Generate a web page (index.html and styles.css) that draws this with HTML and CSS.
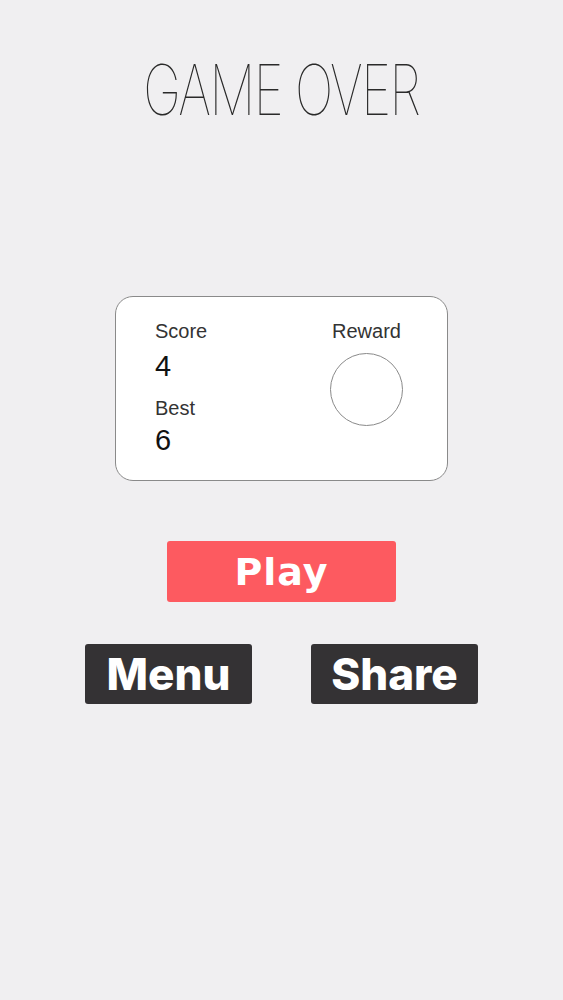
FILE: index.html
```
<!DOCTYPE html>
<html>
<head>
<meta charset="utf-8">
<link rel="stylesheet" href="styles.css">
</head>
<body>
<main class="screen">
  <h1 class="title">GAME OVER</h1>
  <section class="card">
    <div class="stats">
      <div class="label">Score</div>
      <div class="value">4</div>
      <div class="label label-best">Best</div>
      <div class="value value-best">6</div>
    </div>
    <div class="reward">
      <div class="label">Reward</div>
      <div class="coin"></div>
    </div>
  </section>
  <button class="btn btn-play">Play</button>
  <div class="row">
    <button class="btn btn-dark">Menu</button>
    <button class="btn btn-dark">Share</button>
  </div>
</main>
</body>
</html>
```
FILE: styles.css
```
html, body {
  margin: 0;
  padding: 0;
  background: #f0eff1;
}
.screen {
  width: 563px;
  height: 1000px;
  display: flex;
  flex-direction: column;
  align-items: center;
}
.title {
  margin: 55px 0 0 0;
  font-family: "Inter", sans-serif;
  font-weight: 100;
  font-size: 70px;
  line-height: 70px;
  color: #2a2a2a;
  letter-spacing: -2px;
  transform: scaleX(0.73);
  white-space: nowrap;
}
.card {
  margin-top: 171px;
  width: 333px;
  height: 185px;
  box-sizing: border-box;
  border: 1px solid #8a8a8a;
  border-radius: 18px;
  background: #ffffff;
  display: flex;
  justify-content: space-between;
  padding: 23px 44px 0 39px;
  font-family: "Liberation Sans", Arial, sans-serif;
}
.label {
  font-size: 20px;
  line-height: 22px;
  color: #333333;
}
.value {
  font-size: 29px;
  line-height: 34px;
  color: #111111;
  margin-top: 7px;
}
.label-best {
  margin-top: 14px;
}
.value-best {
  margin-top: 4px;
}
.reward {
  display: flex;
  flex-direction: column;
  align-items: center;
}
.coin {
  margin-top: 11px;
  width: 73px;
  height: 73px;
  border: 1.5px solid #8a8a8a;
  border-radius: 50%;
  box-sizing: border-box;
}
.btn {
  border: none;
  padding: 0;
  color: #ffffff;
  font-family: "Inter", sans-serif;
  font-weight: 800;
  border-radius: 3px;
}
.btn-play {
  margin-top: 60px;
  width: 229px;
  height: 61px;
  background: #fd5a60;
  font-family: "DejaVu Sans", sans-serif;
  font-weight: 700;
  font-size: 38px;
  letter-spacing: 1px;
}
.row {
  margin-top: 42px;
  display: flex;
  gap: 59px;
}
.btn-dark {
  width: 167px;
  height: 60px;
  background: #343234;
  font-size: 44px;
}
```
